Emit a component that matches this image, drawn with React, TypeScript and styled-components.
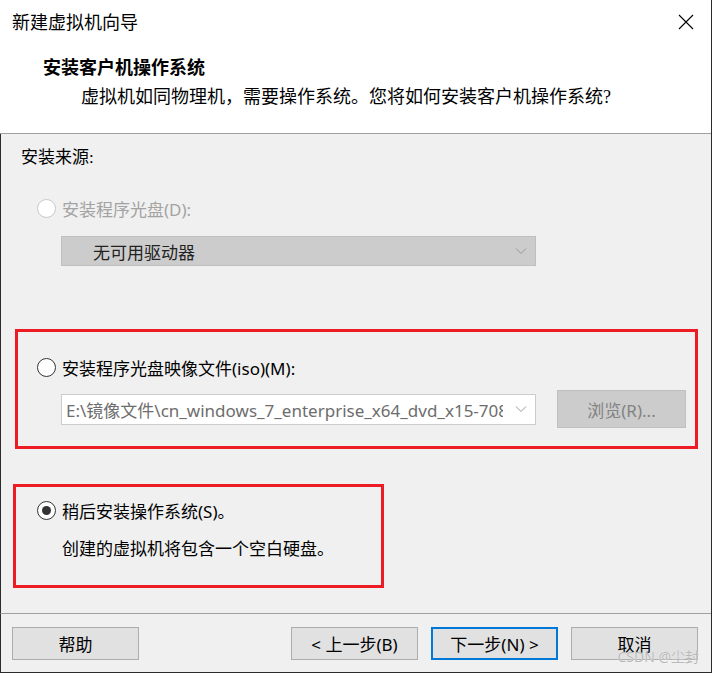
import styled, { createGlobalStyle } from 'styled-components'

const GlobalStyle = createGlobalStyle`
  html, body {
    margin: 0;
    padding: 0;
    background: #ffffff;
  }
  * {
    box-sizing: border-box;
  }
`

const SANS = `'Noto Sans', 'Noto Sans CJK SC', sans-serif`
const SERIF = `'Liberation Serif', 'Noto Sans CJK SC', serif`

const Window = styled.div`
  width: 712px;
  height: 673px;
  display: flex;
  flex-direction: column;
  background: #f0f0f0;
  border-right: 1px solid #2b2b2b;
  position: relative;
  color: #000;
`

const Header = styled.header`
  height: 134px;
  background: #fff;
  border-bottom: 1px solid #a0a0a0;
  display: flex;
  flex-direction: column;
`

const TitleBar = styled.div`
  height: 44px;
  display: flex;
  align-items: center;
  justify-content: space-between;
  padding: 0 17px 0 12px;
`

const WindowTitle = styled.span`
  font-family: ${SANS};
  font-size: 18px;
  line-height: 24px;
`

const CloseIcon = styled.svg`
  width: 16px;
  height: 16px;
  display: block;
`

const Heading = styled.h1`
  margin: 12px 0 0 43px;
  font-family: ${SERIF};
  font-weight: 700;
  font-size: 18px;
  line-height: 24px;
`

const SubHeading = styled.p`
  margin: 5px 0 0 81px;
  font-family: ${SERIF};
  font-size: 18px;
  line-height: 24px;
`

const Body = styled.main`
  flex: 1;
  display: flex;
  flex-direction: column;
  align-items: flex-start;
  padding-left: 20px;
  border-left: 1px solid #2b2b2b;
`

const SourceLabel = styled.div`
  margin-top: 12px;
  font-family: ${SERIF};
  font-size: 17px;
  line-height: 24px;
`

const RadioRow = styled.label<{ $disabled?: boolean; $left: number; $top: number }>`
  display: flex;
  align-items: center;
  gap: 6px;
  height: 24px;
  margin-left: ${(p) => p.$left}px;
  margin-top: ${(p) => p.$top}px;
  font-family: ${SANS};
  font-size: 17px;
  color: ${(p) => (p.$disabled ? '#a3a3a3' : '#000')};
`

const RadioCircle = styled.span<{ $checked?: boolean; $disabled?: boolean }>`
  width: 19px;
  height: 19px;
  border-radius: 50%;
  border: 1.5px solid ${(p) => (p.$disabled ? '#c8c8c8' : '#333')};
  background: #fff;
  display: flex;
  align-items: center;
  justify-content: center;
  flex-shrink: 0;

  &::after {
    content: '';
    display: ${(p) => (p.$checked ? 'block' : 'none')};
    width: 9px;
    height: 9px;
    border-radius: 50%;
    background: #333;
  }
`

const DriveSelect = styled.div`
  width: 475px;
  height: 30px;
  margin: 16px 0 0 40px;
  background: #cccccc;
  border: 1px solid #bfbfbf;
  display: flex;
  align-items: center;
  justify-content: space-between;
  padding: 0 8px 0 31px;
  font-family: ${SANS};
  font-size: 17px;
  color: #222;
`

const Chevron = styled.svg`
  width: 12px;
  height: 8px;
  display: block;
  flex-shrink: 0;
`

const Highlight = styled.section<{ $w: number; $h: number; $left: number; $top: number }>`
  width: ${(p) => p.$w}px;
  height: ${(p) => p.$h}px;
  margin-left: ${(p) => p.$left}px;
  margin-top: ${(p) => p.$top}px;
  border: 3px solid #ed1c24;
  display: flex;
  flex-direction: column;
  align-items: flex-start;
`

const IsoRow = styled.div`
  display: flex;
  align-items: center;
  gap: 21px;
  margin: 11px 0 0 43px;
`

const IsoCombo = styled.div`
  width: 475px;
  height: 31px;
  background: #fff;
  border: 1px solid #cccccc;
  display: flex;
  align-items: center;
  padding: 0 8px 0 4px;
  font-family: ${SANS};
  font-size: 17px;
  color: #6d6d6d;
`

const IsoText = styled.span`
  flex: 1;
  overflow: hidden;
  white-space: nowrap;
  margin-right: 12px;
`

const BrowseButton = styled.button`
  width: 129px;
  height: 38px;
  background: #cccccc;
  border: 1px solid #bfbfbf;
  font-family: ${SANS};
  font-size: 17px;
  color: #838383;
  padding: 0;
`

const Note = styled.div`
  margin: 16px 0 0 46px;
  font-family: ${SERIF};
  font-size: 17px;
  line-height: 24px;
`

const Footer = styled.footer`
  height: 60px;
  border-top: 1px solid #a0a0a0;
  border-bottom: 1px solid #2b2b2b;
  border-left: 1px solid #2b2b2b;
  display: flex;
  justify-content: space-between;
  align-items: flex-start;
  padding: 13px 13px 0 11px;
`

const ButtonGroup = styled.div`
  display: flex;
  gap: 13px;
`

const DialogButton = styled.button<{ $primary?: boolean }>`
  width: 127px;
  height: 33px;
  background: #e1e1e1;
  border: ${(p) => (p.$primary ? '2px solid #0078d7' : '1px solid #adadad')};
  font-family: ${SANS};
  font-size: 17px;
  color: #000;
  padding: 0;
`

const Watermark = styled.span`
  position: absolute;
  right: 12px;
  bottom: 7px;
  font-family: ${SANS};
  font-size: 14px;
  color: #b8b8b8;
  text-shadow: 0 0 1px #fff;
  pointer-events: none;
`

function ChevronDown() {
  return (
    <Chevron viewBox="0 0 12 8">
      <polyline points="1,1.5 6,6.5 11,1.5" fill="none" stroke="#9a9a9a" strokeWidth="1" />
    </Chevron>
  )
}

export default function App() {
  return (
    <>
      <GlobalStyle />
      <Window>
        <Header>
          <TitleBar>
            <WindowTitle>新建虚拟机向导</WindowTitle>
            <CloseIcon viewBox="0 0 16 16">
              <path d="M1 1 L15 15 M15 1 L1 15" stroke="#000" strokeWidth="1.1" fill="none" />
            </CloseIcon>
          </TitleBar>
          <Heading>安装客户机操作系统</Heading>
          <SubHeading>虚拟机如同物理机，需要操作系统。您将如何安装客户机操作系统?</SubHeading>
        </Header>

        <Body>
          <SourceLabel>安装来源:</SourceLabel>

          <RadioRow $disabled $left={16} $top={26}>
            <RadioCircle $disabled />
            安装程序光盘(D):
          </RadioRow>
          <DriveSelect>
            无可用驱动器
            <ChevronDown />
          </DriveSelect>

          <Highlight $w={683} $h={120} $left={-6} $top={63}>
            <RadioRow $left={19} $top={23}>
              <RadioCircle />
              安装程序光盘映像文件(iso)(M):
            </RadioRow>
            <IsoRow>
              <IsoCombo>
                <IsoText>E:\镜像文件\cn_windows_7_enterprise_x64_dvd_x15-70807.iso</IsoText>
                <ChevronDown />
              </IsoCombo>
              <BrowseButton disabled>浏览(R)...</BrowseButton>
            </IsoRow>
          </Highlight>

          <Highlight $w={371} $h={104} $left={-8} $top={35}>
            <RadioRow $left={21} $top={11}>
              <RadioCircle $checked />
              稍后安装操作系统(S)。
            </RadioRow>
            <Note>创建的虚拟机将包含一个空白硬盘。</Note>
          </Highlight>
        </Body>

        <Footer>
          <DialogButton>帮助</DialogButton>
          <ButtonGroup>
            <DialogButton>&lt; 上一步(B)</DialogButton>
            <DialogButton $primary>下一步(N) &gt;</DialogButton>
            <DialogButton>取消</DialogButton>
          </ButtonGroup>
        </Footer>

        <Watermark>CSDN @尘封</Watermark>
      </Window>
    </>
  )
}
